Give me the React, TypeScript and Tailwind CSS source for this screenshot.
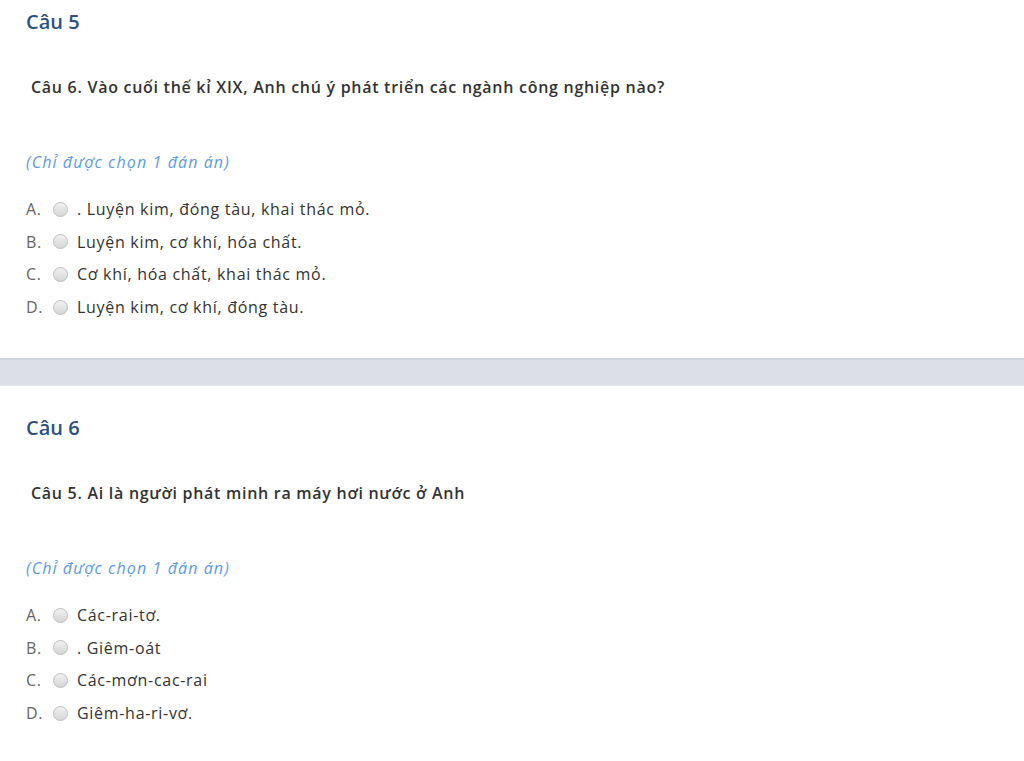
const questions = [
  {
    title: "Câu 5",
    text: "Câu 6. Vào cuối thế kỉ XIX, Anh chú ý phát triển các ngành công nghiệp nào?",
    options: [
      ". Luyện kim, đóng tàu, khai thác mỏ.",
      "Luyện kim, cơ khí, hóa chất.",
      "Cơ khí, hóa chất, khai thác mỏ.",
      "Luyện kim, cơ khí, đóng tàu.",
    ],
  },
  {
    title: "Câu 6",
    text: "Câu 5. Ai là người phát minh ra máy hơi nước ở Anh",
    options: [
      "Các-rai-tơ.",
      ". Giêm-oát",
      "Các-mơn-cac-rai",
      "Giêm-ha-ri-vơ.",
    ],
  },
];

const letters = ["A.", "B.", "C.", "D."];

function Radio() {
  return (
    <span className="inline-block w-[15px] h-[15px] rounded-full border border-[#bdbdbd] bg-gradient-to-b from-[#f2f2f2] to-[#d6d6d6] shrink-0" />
  );
}

function Question({ q, first }: { q: (typeof questions)[number]; first?: boolean }) {
  return (
    <section className={first ? "pt-[10px] pb-[39px] px-[26px]" : "pt-[30px] pb-[39px] px-[26px]"}>
      <h2 className="text-[20px] leading-[24px] font-semibold text-[#2b5282]">{q.title}</h2>
      <p className="mt-[41px] ml-[5px] text-[16px] leading-[24px] font-semibold tracking-[0.72px] text-[#333]">{q.text}</p>
      <p className="mt-[51px] text-[16px] leading-[24px] italic tracking-[1.1px] text-[#5a9be8]">(Chỉ được chọn 1 đán án)</p>
      <ul className="mt-[23px] flex flex-col gap-[8.7px]">
        {q.options.map((o, i) => (
          <li key={i} className="flex items-center h-[24px] text-[16px] tracking-[0.7px]">
            <span className="w-[27px] text-[#666]">{letters[i]}</span>
            <Radio />
            <span className="ml-[9px] text-[#333]">{o}</span>
          </li>
        ))}
      </ul>
    </section>
  );
}

export default function App() {
  return (
    <div className="min-h-[761px] bg-white font-['Open_Sans',sans-serif]">
      <Question q={questions[0]} first />
      <div className="h-[28px] bg-[#dcdfe8] border-t-2 border-[#cfd4e0] border-b border-b-[#e4e7ee]" />
      <Question q={questions[1]} />
    </div>
  );
}
